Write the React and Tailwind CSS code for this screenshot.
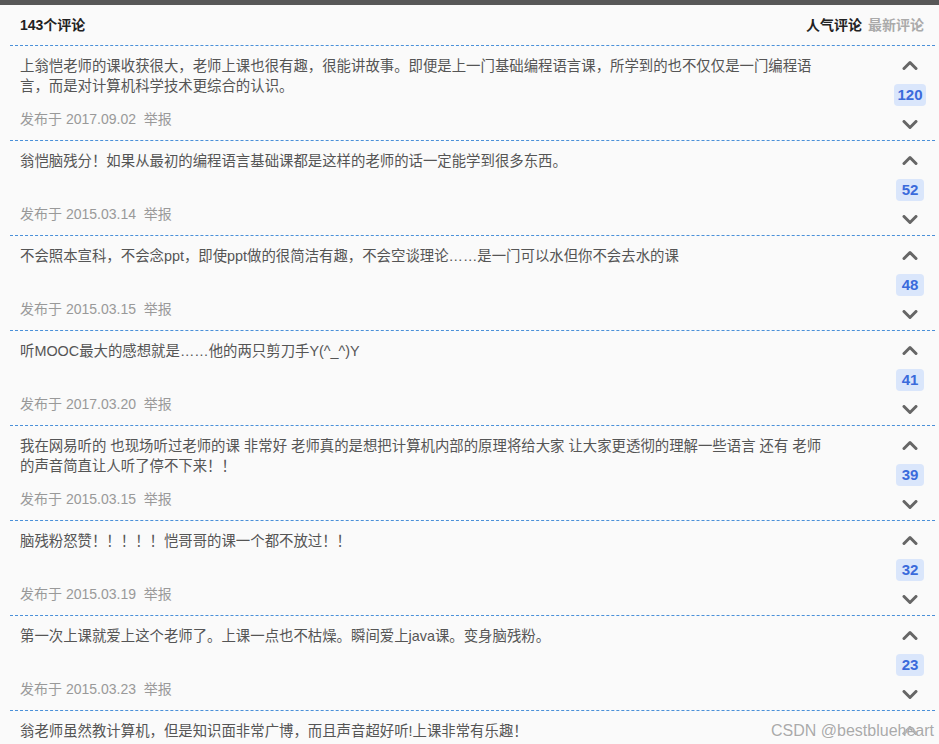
import React from 'react';

const COMMENTS = [
  { text: '上翁恺老师的课收获很大，老师上课也很有趣，很能讲故事。即便是上一门基础编程语言课，所学到的也不仅仅是一门编程语言，而是对计算机科学技术更综合的认识。', date: '2017.09.02', votes: 120 },
  { text: '翁恺脑残分！如果从最初的编程语言基础课都是这样的老师的话一定能学到很多东西。', date: '2015.03.14', votes: 52 },
  { text: '不会照本宣科，不会念ppt，即使ppt做的很简洁有趣，不会空谈理论……是一门可以水但你不会去水的课', date: '2015.03.15', votes: 48 },
  { text: '听MOOC最大的感想就是……他的两只剪刀手Y(^_^)Y', date: '2017.03.20', votes: 41 },
  { text: '我在网易听的 也现场听过老师的课 非常好 老师真的是想把计算机内部的原理将给大家 让大家更透彻的理解一些语言 还有 老师的声音简直让人听了停不下来！！', date: '2015.03.15', votes: 39 },
  { text: '脑残粉怒赞！！！！！恺哥哥的课一个都不放过！！', date: '2015.03.19', votes: 32 },
  { text: '第一次上课就爱上这个老师了。上课一点也不枯燥。瞬间爱上java课。变身脑残粉。', date: '2015.03.23', votes: 23 },
  { text: '翁老师虽然教计算机，但是知识面非常广博，而且声音超好听!上课非常有乐趣！', date: '2015.03.12', votes: 21 },
];

const FONT = { fontFamily: '"Liberation Sans", Arial, "Noto Sans CJK SC", sans-serif' };

function Chevron({ up }) {
  return (
    <svg width="16" height="10" viewBox="0 0 16 10" className="block">
      <polyline
        points={up ? '2,8.5 8,2.5 14,8.5' : '2,1.5 8,7.5 14,1.5'}
        fill="none"
        stroke="#666"
        strokeWidth="3"
        strokeLinecap="round"
        strokeLinejoin="round"
      />
    </svg>
  );
}

function CommentItem({ c }) {
  return (
    <div className="flex justify-between border-b border-dashed border-[#4a90d9] pl-[10px] pr-[10px] h-[95px]">
      <div className="pt-[10px]">
        <div className="w-[805px] min-h-[40px] text-[14.4px] leading-[20px] text-[#555]">{c.text}</div>
        <div className="mt-[13px] text-[14px] leading-[20px] text-[#999]">
          发布于 {c.date}&nbsp;&nbsp;举报
        </div>
      </div>
      <div className="w-[30px] flex flex-col items-center pt-[14px]">
        <Chevron up />
        <div className="mt-[14px] h-[22px] px-[3px] min-w-[28px] rounded-[4px] bg-[#dae6fb] text-[#3b6bdb] font-bold text-[15px] leading-[22px] text-center">
          {c.votes}
        </div>
        <div className="mt-[14px]">
          <Chevron />
        </div>
      </div>
    </div>
  );
}

export default function App() {
  return (
    <div className="relative w-[939px] h-[744px] overflow-hidden bg-[#fafafa]" style={FONT}>
      <div className="h-[5px] bg-[#585858]" />
      <div className="ml-[10px] mr-[4px]">
        <div className="h-[41px] flex items-center justify-between pl-[10px] pr-[11px] border-b border-dashed border-[#4a90d9]">
          <div className="text-[14px] font-bold text-[#222]">143个评论</div>
          <div className="text-[14px] font-bold flex gap-[6px]">
            <span className="text-[#222]">人气评论</span>
            <span className="text-[#aaa]">最新评论</span>
          </div>
        </div>
        {COMMENTS.map((c, i) => (
          <CommentItem key={i} c={c} />
        ))}
      </div>
      <div className="absolute right-[5px] bottom-[3px] text-[16px] text-[#aaa] leading-[20px]" style={{ textShadow: '0 0 2px #fff, 0 0 2px #fff' }}>
        CSDN @bestblueheart
      </div>
    </div>
  );
}
